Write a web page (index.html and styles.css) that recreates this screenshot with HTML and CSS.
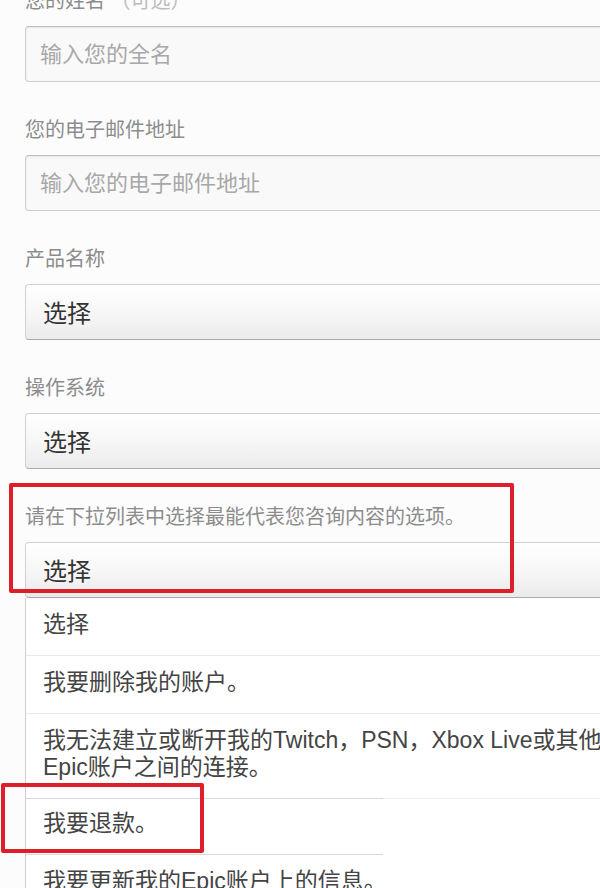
FILE: index.html
```html
<!DOCTYPE html>
<html lang="zh-CN">
<head>
<meta charset="utf-8">
<title>联系我们</title>
<link rel="stylesheet" href="styles.css">
</head>
<body>
<form class="form">
  <div class="field">
    <div class="label">您的姓名 <span class="optional">（可选）</span></div>
    <input class="text-input" type="text" placeholder="输入您的全名">
  </div>
  <div class="field">
    <div class="label">您的电子邮件地址</div>
    <input class="text-input" type="email" placeholder="输入您的电子邮件地址">
  </div>
  <div class="field">
    <div class="label">产品名称</div>
    <div class="select">选择</div>
  </div>
  <div class="field">
    <div class="label">操作系统</div>
    <div class="select">选择</div>
  </div>
  <div class="field field-open">
    <div class="label">请在下拉列表中选择最能代表您咨询内容的选项。</div>
    <div class="select">选择</div>
    <ul class="dropdown">
      <li class="option">选择</li>
      <li class="option">我要删除我的账户。</li>
      <li class="option option-patch">我无法建立或断开我的Twitch，PSN，Xbox Live或其他账户与我的<br>Epic账户之间的连接。</li>
      <li class="option option-patch-short">我要退款。</li>
      <li class="option">我要更新我的Epic账户上的信息。</li>
    </ul>
  </div>
</form>
<div class="highlight highlight-question"></div>
<div class="highlight highlight-refund"></div>
</body>
</html>
```
FILE: styles.css
```css
html, body {
  margin: 0;
  padding: 0;
  width: 600px;
  height: 888px;
  overflow: hidden;
  background: #fcfcfc;
}

body {
  position: relative;
  font-family: "Liberation Sans", "Noto Sans CJK SC", sans-serif;
}

.form {
  margin: -11px 0 0 0;
  padding: 0 0 0 25px;
  width: 800px;
}

.field {
  margin-bottom: 36px;
}

.field-open {
  margin-bottom: 0;
}

.label {
  font-size: 20px;
  line-height: 24px;
  color: #8c8c8c;
  margin-bottom: 13px;
  white-space: nowrap;
}

.optional {
  color: #bcbcbc;
}

.text-input {
  display: block;
  box-sizing: border-box;
  width: 100%;
  height: 56px;
  margin: 0;
  padding: 2px 14px 0;
  border: 1px solid #cdcdcd;
  border-top-color: #bdbdbd;
  border-radius: 4px;
  background: #f9f9f9;
  box-shadow: inset 0 1px 2px rgba(0, 0, 0, 0.08);
  font-family: "Liberation Sans", "Noto Sans CJK SC", sans-serif;
  font-size: 22px;
  color: #333;
  outline: none;
}

.text-input::placeholder {
  color: #a8a8a8;
}

.select {
  box-sizing: border-box;
  height: 56px;
  padding: 0 17px 1px;
  display: flex;
  align-items: center;
  border: 1px solid #d0d0d0;
  border-bottom-color: #a9a9a9;
  border-radius: 4px;
  background: linear-gradient(to bottom, #ffffff 0%, #f6f6f6 55%, #ebebeb 100%);
  font-size: 24px;
  color: #333;
}

.dropdown {
  list-style: none;
  margin: 0;
  padding: 0;
  background: #ffffff;
  border-left: 1px solid #cfcfcf;
}

.option {
  padding: 13px 17px 17px;
  font-size: 23px;
  line-height: 27px;
  color: #444;
  border-bottom: 1px solid #e9e9e9;
  white-space: nowrap;
}

.option:last-child {
  border-bottom: none;
}

.option-patch {
  border-bottom: 1px solid transparent;
  border-image: linear-gradient(to right, #d9d9d9 357px, #f1f1f1 357px) 1;
}

.option-patch-short {
  padding-top: 11px;
  border-bottom: 1px solid transparent;
  border-image: linear-gradient(to right, #d9d9d9 357px, transparent 357px) 1;
}

.highlight {
  position: absolute;
  box-sizing: border-box;
  border: 4px solid #dc1f2b;
  border-radius: 2px;
}

.highlight-question {
  left: 9px;
  top: 483px;
  width: 505px;
  height: 110px;
}

.highlight-refund {
  left: 1px;
  top: 783px;
  width: 203px;
  height: 70px;
}
```
